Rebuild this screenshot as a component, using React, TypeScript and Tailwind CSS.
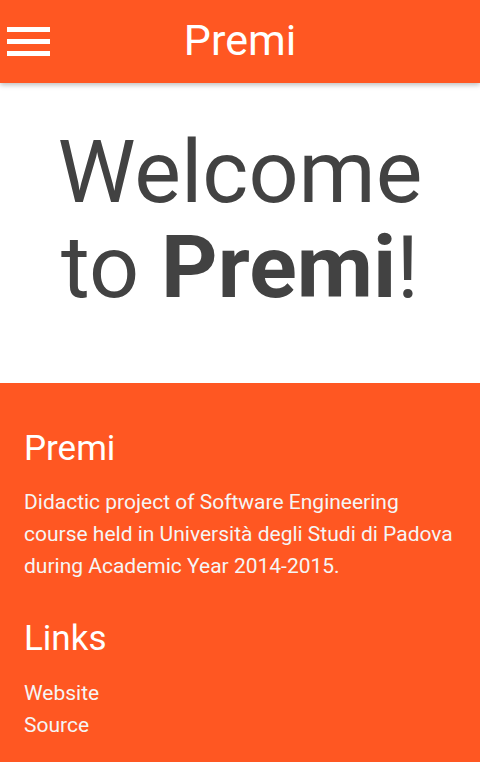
export default function App() {
  return (
    <div className="min-h-[762px] bg-white font-['Roboto',sans-serif]">
      {/* NAVBAR */}
      <header className="relative z-10 grid h-[83px] grid-cols-[1fr_auto_1fr] items-center bg-[#ff5722] shadow-[0_2px_5px_rgba(0,0,0,0.26)]">
        <div className="flex flex-col gap-[7px] pl-[7px]">
          <span className="block h-[5px] w-[43px] bg-white" />
          <span className="block h-[5px] w-[43px] bg-white" />
          <span className="block h-[5px] w-[43px] bg-white" />
        </div>
        <h1 className="pb-[2px] text-[43px] leading-none text-white">Premi</h1>
        <div />
      </header>

      {/* BENVENUTO */}
      <section className="h-[300px] pt-[41px] text-center">
        <h2 className="text-[88px] leading-[95px] text-[#424242]">
          Welcome
          <br />
          to <span className="font-bold">Premi</span>!
        </h2>
      </section>

      {/* FOOTER */}
      <footer className="h-[379px] bg-[#ff5722] px-6 pt-[45px] text-white">
        <h3 className="text-[35px] leading-[42px]">Premi</h3>
        <p className="mt-4 text-[21px] leading-[32px] text-[#f5f5f5]">
          Didactic project of Software Engineering course held in Università degli Studi di Padova during Academic Year 2014-2015.
        </p>
        <h3 className="mt-9 text-[35px] leading-[42px]">Links</h3>
        <ul className="mt-[17px] text-[21px] leading-[32px] text-[#f5f5f5]">
          <li>
            <a href="#">Website</a>
          </li>
          <li>
            <a href="#">Source</a>
          </li>
        </ul>
      </footer>
    </div>
  );
}
